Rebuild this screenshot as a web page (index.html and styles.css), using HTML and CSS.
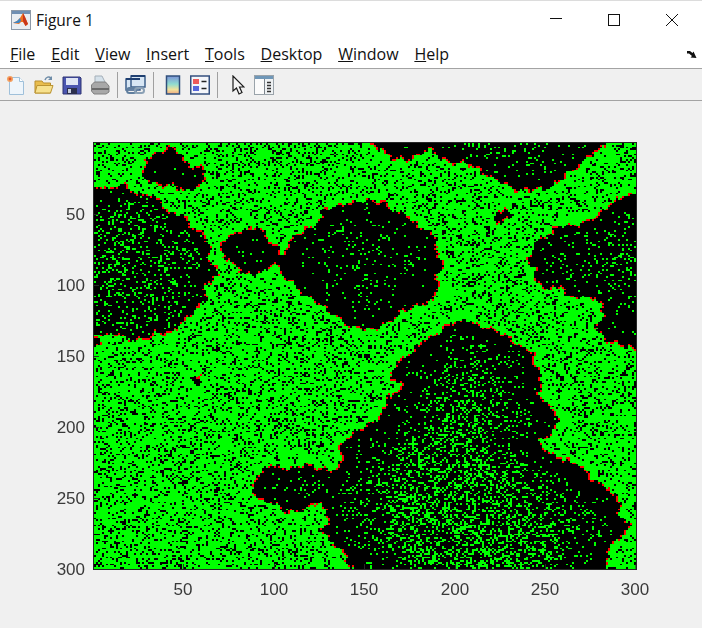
FILE: index.html
```html
<!DOCTYPE html>
<html lang="en">
<head>
<meta charset="utf-8">
<title>Figure 1</title>
<link rel="stylesheet" href="styles.css">
</head>
<body>
<div class="window">
  <header class="titlebar">
    <svg class="app-icon" width="20" height="20" viewBox="0 0 20 20">
      <rect x="0.5" y="0.5" width="19" height="19" fill="#e9edf2" stroke="#8d99a8"/>
      <rect x="1" y="1" width="18" height="3" fill="#6f8fb3"/>
      <path d="M2 13l4-2 3-3 3-5 2 4 3 7-2.5 2-2.5-4-2 0-2 2z" fill="#f0701f"/>
      <path d="M12 3l2 4 3 7-2.5 2-2.5-5z" fill="#c8361c"/>
      <path d="M2 13l4-2 3-3 1 3-2 2z" fill="#3f87c4"/>
    </svg>
    <span class="title">Figure 1</span>
    <div class="controls">
      <svg class="ctl" width="14" height="14" viewBox="0 0 14 14"><path d="M1 5.5h12" stroke="#111" fill="none"/></svg>
      <svg class="ctl" width="14" height="14" viewBox="0 0 14 14"><rect x="1.5" y="1.5" width="11" height="11" stroke="#111" fill="none"/></svg>
      <svg class="ctl" width="14" height="14" viewBox="0 0 14 14"><path d="M1 1l12 12M13 1L1 13" stroke="#111" fill="none"/></svg>
    </div>
  </header>
  <nav class="menubar">
    <span><u>F</u>ile</span>
    <span><u>E</u>dit</span>
    <span><u>V</u>iew</span>
    <span><u>I</u>nsert</span>
    <span><u>T</u>ools</span>
    <span><u>D</u>esktop</span>
    <span><u>W</u>indow</span>
    <span><u>H</u>elp</span>
    <svg class="dock" width="10" height="8" viewBox="0 0 10 8"><path d="M0 1h3l2.500 2 1-1.500L9.500 8l-6-.5 1.500-1.500-3-2.500H0z" fill="#111"/></svg>
  </nav>
  <div class="toolbar">
    <svg class="tool" width="20" height="20" viewBox="0 0 20 20">
      <path d="M3.5 2.5h10l4 4v13h-14z" fill="#eef5fb" stroke="#9fc0da"/>
      <path d="M13.5 2.5v4h4" fill="#fff" stroke="#9fc0da"/>
      <circle cx="4" cy="4" r="3" fill="#f3a05f"/><circle cx="4" cy="4" r="1.4" fill="#e2572a"/>
    </svg>
    <svg class="tool" width="20" height="20" viewBox="0 0 20 20">
      <path d="M1 6h7l1.500 2h7v10H1z" fill="#e9bd4e" stroke="#b98f2f"/>
      <path d="M1 18l2-7.500h16L16.500 18z" fill="#f7e18e" stroke="#bb9433"/>
      <path d="M11 5c1-3 4-4 6-2" fill="none" stroke="#6e8ca8" stroke-width="1.500"/>
      <path d="M18 1v4h-4z" fill="#6e8ca8"/>
    </svg>
    <svg class="tool" width="20" height="20" viewBox="0 0 20 20">
      <path d="M1 2h17l1 1v16H1z" fill="#4a55b0" stroke="#2e3572"/>
      <rect x="4" y="3" width="12" height="7" fill="#dfe5f5"/>
      <rect x="5" y="13" width="10" height="6" fill="#2b2f4d"/>
      <rect x="6" y="14" width="3" height="4" fill="#c8cede"/>
    </svg>
    <svg class="tool" width="20" height="20" viewBox="0 0 20 20">
      <path d="M5 1h7l3 6v3H5z" fill="#d5e1ea" stroke="#a4afb8"/>
      <path d="M1.500 10l3-3h11l3.500 4v6l-3 2H4l-2.500-3z" fill="#a8a8a8" stroke="#808080"/>
      <path d="M2 13h17v2H2z" fill="#6b6b6b"/>
    </svg>
    <span class="sep sep-a"></span>
    <svg class="tool link-icon" width="21" height="20" viewBox="0 0 21 20">
      <rect x="1" y="4" width="14" height="11" fill="#d7e6f4" stroke="#3d5f8a" stroke-width="1.500"/>
      <rect x="6" y="1" width="14" height="11" fill="#d7e6f4" stroke="#3d5f8a" stroke-width="1.500"/>
      <path d="M1 4h14M6 1h14" stroke="#1f3f70" stroke-width="2"/>
      <rect x="2" y="13" width="9" height="5" rx="2.500" fill="none" stroke="#5f7e9e" stroke-width="2"/>
      <rect x="10" y="13" width="9" height="5" rx="2.500" fill="none" stroke="#8aa0b5" stroke-width="2"/>
    </svg>
    <span class="sep sep-b"></span>
    <svg class="tool bar-icon" width="16" height="20" viewBox="0 0 16 20">
      <defs><linearGradient id="cb" x1="0" y1="0" x2="0" y2="1"><stop offset="0" stop-color="#7d93d8"/><stop offset=".45" stop-color="#8fdcd0"/><stop offset=".75" stop-color="#f0e29c"/><stop offset="1" stop-color="#eea77f"/></linearGradient></defs>
      <rect x="1.500" y="1" width="13" height="18" fill="url(#cb)" stroke="#31507c" stroke-width="1.500"/>
    </svg>
    <svg class="tool legend-icon" width="20" height="20" viewBox="0 0 20 20">
      <rect x="0.750" y="1" width="18.500" height="18" fill="#f4f6fa" stroke="#34507f" stroke-width="1.500"/>
      <rect x="3" y="4" width="6" height="5" fill="#ef5a5a"/>
      <rect x="3" y="11" width="6" height="5" fill="#5868dc"/>
      <path d="M11.500 6.500h5M11.500 13.500h5" stroke="#222" stroke-width="1.500"/>
    </svg>
    <span class="sep sep-c"></span>
    <svg class="tool cursor-icon" width="13" height="20" viewBox="0 0 13 20"><path d="M1 1v15l3.500-3 2.500 6 3-1.500-2.500-5.500H12z" fill="#f4f4f4" stroke="#1a1a1a" stroke-width="1.200"/></svg>
    <svg class="tool panel-icon" width="20" height="20" viewBox="0 0 20 20">
      <rect x="0.500" y="0.500" width="19" height="19" fill="#eef1f3" stroke="#9aa3aa"/>
      <rect x="1" y="1" width="18" height="3" fill="#6f97b8"/>
      <rect x="1" y="4" width="9" height="15" fill="#fbfbfb"/>
      <path d="M10.500 4v15" stroke="#7d858c"/>
      <path d="M13 7.500h4M13 10.500h4M13 13.500h4M13 16.500h4" stroke="#333" stroke-width="1.300"/>
    </svg>
  </div>
  <main class="figure">
    <div class="axes">
      <canvas id="plot" class="plot" width="542" height="426"></canvas>
      <svg class="overlay" width="544" height="428" viewBox="0 0 544 428">
        <g class="ticks">
          <path d="M90.500 427v-5M181.500 427v-5M271.500 427v-5M362.500 427v-5M452.500 427v-5M543 427v-5"/>
          <path d="M1 72.500h5M1 143.500h5M1 214.500h5M1 285.500h5M1 356.500h5"/>
        </g>
        <g class="xl">
          <text x="90" y="453">50</text><text x="181" y="453">100</text><text x="271" y="453">150</text>
          <text x="362" y="453">200</text><text x="452" y="453">250</text><text x="542" y="453">300</text>
        </g>
        <g class="yl">
          <text x="-8" y="78">50</text><text x="-8" y="149">100</text><text x="-8" y="220">150</text>
          <text x="-8" y="291">200</text><text x="-8" y="362">250</text><text x="-8" y="433">300</text>
        </g>
      </svg>
    </div>
  </main>
</div>
<script src="app.js"></script>
</body>
</html>
```

FILE: styles.css
```css
* { box-sizing: border-box; }
html, body { margin: 0; height: 100%; }
body { background: #f0f0f0; overflow: hidden; }
.window {
  width: 702px;
  height: 628px;
  display: flex;
  flex-direction: column;
  border-top: 1px solid #dcdcdc;
  font-family: "Open Sans", "Noto Sans", "Liberation Sans", sans-serif;
  color: #111;
}
.titlebar {
  height: 39px;
  background: #fff;
  display: flex;
  align-items: center;
  padding-left: 11px;
}
.app-icon { flex: none; margin-top: -1px; }
.title { margin-left: 5px; font-size: 15.500px; margin-top: -1px; }
.controls {
  margin-left: auto;
  display: flex;
  gap: 44px;
  padding-right: 23px;
  margin-top: -1px;
}
.menubar {
  height: 29px;
  background: #fff;
  display: flex;
  align-items: center;
  gap: 15.800px;
  padding-left: 10px;
  font-size: 16px;
  border-bottom: 1px solid #a3a3a3;
  position: relative;
}
.menubar span { white-space: nowrap; }
.dock { position: absolute; right: 5px; top: 10px; }
.toolbar {
  height: 32px;
  background: #f0f0f0;
  border-bottom: 1px solid #a3a3a3;
  display: flex;
  align-items: center;
  padding-left: 6px;
  gap: 8px;
}
.tool { flex: none; }
.sep { flex: none; width: 1px; height: 26px; background: #a0a0a0; }
.sep-a { margin-left: -1px; }
.link-icon { margin-left: -1px; }
.sep-b { margin-left: -1px; }
.bar-icon { margin-left: 3px; }
.legend-icon { margin-left: 1px; }
.sep-c { margin-left: -1px; }
.cursor-icon { margin-left: 6px; }
.panel-icon { margin-left: 1px; }
.figure {
  flex: 1;
  padding: 41px 0 0 93px;
}
.axes {
  position: relative;
  width: 544px;
  height: 428px;
  border: 1px solid #262626;
}
.plot { display: block; image-rendering: pixelated; }
.overlay {
  position: absolute;
  left: -1px;
  top: -1px;
  overflow: visible;
}
.ticks path { stroke: #262626; stroke-width: 1; fill: none; }
.xl text, .yl text {
  font-family: "Liberation Sans", Arial, sans-serif;
  font-size: 17px;
  fill: #3a3a3a;
}
.xl text { text-anchor: middle; }
.yl text { text-anchor: end; }
```

FILE: app.js
```js
(function () {
  var OX = 94, OY = 143, NC = 271, NR = 240;
  var canvas = document.getElementById('plot');
  var ctx = canvas.getContext('2d');
  var CW = canvas.width / NC, CH = canvas.height / NR;

  // Regions of the black phase, in window pixels, each with its own noise level.
  var regions = [
    { base: 0.00, slope: 0.006, pts: [[168,145],[162,151],[153,155],[145,160],[142,170],[145,180],[158,186],[175,186],[187,192],[198,188],[205,181],[207,171],[198,166],[187,165],[185,158],[180,151]] },
    { base: 0.12, slope: 0.004, pts: [[90,190],[94,190],[102,185],[110,190],[120,183],[133,188],[137,194],[147,194],[162,201],[170,213],[180,214],[193,226],[205,235],[212,245],[208,253],[212,263],[222,275],[212,281],[203,285],[210,295],[198,308],[185,320],[170,335],[155,333],[153,338],[127,341],[118,335],[110,335],[90,335]] },
    { base: 0.00, slope: 0.006, pts: [[90,336],[105,341],[90,352]] },
    { base: 0.00, slope: 0.006, pts: [[258,225],[247,230],[237,230],[227,237],[218,248],[227,260],[247,275],[258,275],[277,261],[280,248],[267,236]] },
    { base: 0.03, slope: 0.003, pts: [[317,221],[323,210],[337,206],[357,201],[370,200],[383,201],[393,210],[403,213],[420,226],[440,240],[435,248],[445,263],[438,275],[438,295],[427,303],[405,311],[388,323],[373,331],[360,328],[353,328],[337,318],[320,305],[300,291],[287,280],[275,266],[282,253],[293,236],[303,228],[317,228]] },
    { base: 0.04, slope: 0.004, pts: [[367,140],[367,143],[380,150],[395,160],[413,160],[427,150],[440,156],[450,164],[465,163],[487,175],[507,186],[517,191],[533,191],[550,188],[573,170],[590,158],[607,143],[607,140]] },
    { base: 0.00, slope: 0.000, pts: [[500,210],[492,216],[497,224],[507,220],[512,215],[507,209]] },
    { base: 0.06, slope: 0.004, pts: [[640,193],[620,196],[600,213],[580,225],[560,226],[540,238],[533,248],[527,260],[535,271],[535,285],[553,290],[563,285],[567,298],[590,298],[602,306],[602,320],[593,328],[607,341],[623,346],[640,351]] },
    { base: 0.02, slope: 0.008, pts: [[467,320],[453,321],[440,331],[423,341],[407,355],[390,370],[393,380],[402,387],[387,398],[383,412],[370,423],[347,437],[337,452],[343,462],[333,470],[320,468],[307,463],[293,468],[280,467],[270,463],[260,472],[250,487],[260,500],[273,505],[287,513],[300,512],[317,503],[327,513],[327,525],[320,530],[327,538],[343,552],[347,562],[357,572],[608,572],[608,555],[613,543],[627,532],[632,527],[620,515],[620,498],[593,478],[577,463],[553,455],[537,442],[557,430],[558,415],[547,403],[540,395],[542,378],[535,365],[535,355],[513,340],[493,328],[480,326]] },
    { base: 0.00, slope: 0.000, pts: [[193,376],[201,376],[203,382],[198,386],[193,384]] }
  ];

  function inPoly(p, x, y) {
    var c = false;
    for (var i = 0, j = p.length - 1; i < p.length; j = i++) {
      if ((p[i][1] > y) !== (p[j][1] > y) &&
          x < (p[j][0] - p[i][0]) * (y - p[i][1]) / (p[j][1] - p[i][1]) + p[i][0]) c = !c;
    }
    return c;
  }

  var seed = 20240611;
  function rnd() {
    seed = (seed + 0x6D2B79F5) | 0;
    var t = Math.imul(seed ^ (seed >>> 15), 1 | seed);
    t = (t + Math.imul(t ^ (t >>> 7), 61 | t)) ^ t;
    return ((t ^ (t >>> 14)) >>> 0) / 4294967296;
  }

  var size = NC * NR;
  var owner = new Int16Array(size).fill(-1), mask = new Uint8Array(size), dist = new Int32Array(size).fill(-1);
  var r, c, k, i;
  for (r = 0; r < NR; r++) {
    for (c = 0; c < NC; c++) {
      var x = OX + (c + 0.5) * CW, y = OY + (r + 0.5) * CH;
      // Small wobble so the phase edges are ragged rather than straight.
      var wx = x + 1.6 * Math.sin(y * 0.37) + 1.1 * Math.sin(y * 0.83 + 1.3);
      var wy = y + 1.6 * Math.sin(x * 0.41 + 0.7) + 1.1 * Math.sin(x * 0.91);
      for (k = 0; k < regions.length; k++) {
        if (inPoly(regions[k].pts, wx, wy)) { mask[r * NC + c] = 1; owner[r * NC + c] = k; break; }
      }
    }
  }

  // Distance from the phase boundary, which thins the noise near it.
  var queue = [], edge = new Uint8Array(size);
  var nb = [[0, 1], [0, -1], [1, 0], [-1, 0]];
  for (r = 0; r < NR; r++) {
    for (c = 0; c < NC; c++) {
      var cell = r * NC + c;
      for (i = 0; i < 4; i++) {
        var a = r + nb[i][0], b = c + nb[i][1];
        if (a < 0 || b < 0 || a >= NR || b >= NC) continue;
        if (mask[a * NC + b] !== mask[cell]) {
          if (mask[cell]) edge[cell] = 1;
          if (dist[cell] < 0) { dist[cell] = 0; queue.push(cell); }
        }
      }
    }
  }
  for (var h = 0; h < queue.length; h++) {
    var q = queue[h], qr = Math.floor(q / NC), qc = q % NC;
    for (i = 0; i < 4; i++) {
      var ar = qr + nb[i][0], ac = qc + nb[i][1];
      if (ar < 0 || ac < 0 || ar >= NR || ac >= NC) continue;
      if (dist[ar * NC + ac] < 0) { dist[ar * NC + ac] = dist[q] + 1; queue.push(ar * NC + ac); }
    }
  }

  ctx.fillStyle = '#000';
  ctx.fillRect(0, 0, canvas.width, canvas.height);
  for (r = 0; r < NR; r++) {
    var y0 = Math.round(r * CH), y1 = Math.round((r + 1) * CH);
    for (c = 0; c < NC; c++) {
      var id = r * NC + c, d = dist[id], color;
      if (mask[id]) {
        var reg = regions[owner[id]];
        if (edge[id] && rnd() < 0.5) color = '#ff0000';
        else color = rnd() < Math.min(0.34, reg.base * Math.min(1, d / 6) + Math.max(0, d - 2) * reg.slope) ? '#00ff00' : '#000000';
      } else {
        color = rnd() < Math.min(0.2, d * 0.05) ? '#000000' : '#00ff00';
      }
      if (color === '#000000') continue;
      var x0 = Math.round(c * CW), x1 = Math.round((c + 1) * CW);
      ctx.fillStyle = color;
      ctx.fillRect(x0, y0, x1 - x0, y1 - y0);
    }
  }
})();
```
